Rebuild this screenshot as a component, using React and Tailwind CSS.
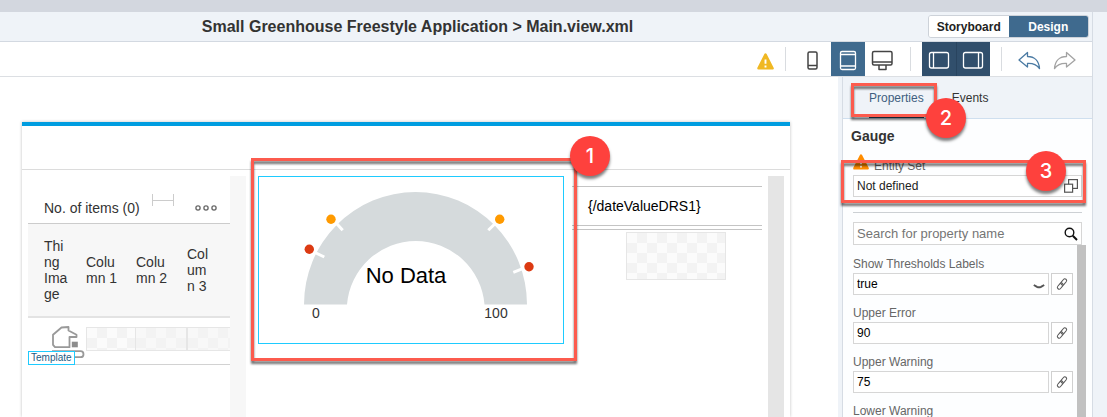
import React from "react";

const CHECKER =
  "bg-[repeating-conic-gradient(#f3f3f3_0_25%,#fbfbfb_0_50%)] bg-[length:20px_20px] border border-[#e6e6e6]";

function Frame({ className }) {
  return (
    <div
      className={`pointer-events-none absolute z-20 border-[3px] border-[#fc5b4e] drop-shadow-[0_3px_1px_rgba(0,0,0,0.55)] ${className}`}
    />
  );
}

function Marker({ className, children }) {
  return (
    <div
      className={`pointer-events-none absolute z-30 flex size-10 items-center justify-center rounded-full bg-[#fe413d] font-['Inter',sans-serif] text-xl font-medium text-white shadow-[0_3px_3px_rgba(0,0,0,0.5)] ${className}`}
    >
      {children}
    </div>
  );
}

function Warning({ className }) {
  return (
    <svg viewBox="0 0 16 16" className={className} aria-hidden="true">
      <path d="M8 1.6 14.6 14.4H1.4Z" fill="currentColor" stroke="currentColor" strokeWidth="2.4" strokeLinejoin="round" />
      <path d="M8 6v4.2M8 11.8v1.8" stroke="#fff" strokeWidth="1.8" />
    </svg>
  );
}

function ToolButton({ label, className = "", children }) {
  return (
    <button type="button" aria-label={label} className={`h-[34px] w-[34px] shrink-0 ${className}`}>
      <svg viewBox="0 0 34 34" fill="none" stroke="currentColor" strokeWidth="1.5" strokeLinejoin="round" className="size-[34px]">
        {children}
      </svg>
    </button>
  );
}

function Separator() {
  return <div className="mx-[11px] h-6 w-px shrink-0 bg-[#d9dce0]" />;
}

function Header() {
  return (
    <header className="flex h-[30px] items-center border-b border-[#d3d9e1] bg-[#eff3f8]">
      <h1 className="min-w-0 flex-1 text-center text-base leading-5 font-bold whitespace-nowrap text-[#333]">
        Small Greenhouse Freestyle Application &gt; Main.view.xml
      </h1>
      <div className="flex w-[257px] shrink-0 justify-end pr-[3px]">
        <div className="flex h-[23px] w-[161px] overflow-hidden rounded-[3px] border border-[#cdd2d9] text-xs font-bold">
          <button type="button" className="flex-1 bg-white text-[#222]">Storyboard</button>
          <button type="button" className="flex-1 bg-[#3f6a8e] text-white">Design</button>
        </div>
      </div>
    </header>
  );
}

function Toolbar() {
  return (
    <div className="flex h-[35px] items-center justify-end border-b border-[#dcdfe3] bg-white pr-[11px] text-[#444]">
      <Warning className="mt-1 size-[17px] text-[#f0b823]" />
      <Separator />
      <ToolButton label="Phone">
        <rect x="11" y="10" width="9" height="17" rx="1.5" />
        <path d="M11 23.5h9" />
      </ToolButton>
      <ToolButton label="Tablet" className="bg-[#3f6a8e] text-white">
        <rect x="9.5" y="9.5" width="15" height="18" rx="1.5" strokeWidth="1.3" />
        <path d="M9 12.5h16M9 24h16" strokeWidth="1.3" />
      </ToolButton>
      <ToolButton label="Desktop">
        <rect x="7.5" y="9.5" width="19.5" height="13.5" rx="1.5" />
        <path d="M7.5 20h19.5M14 23v4.500h7V23" />
      </ToolButton>
      <Separator />
      <ToolButton label="Left panel" className="bg-[#314f6c] text-white">
        <rect x="7.5" y="10.5" width="19" height="15.5" rx="2" strokeWidth="1.3" />
        <path d="M11.5 10.5v15.5" strokeWidth="1.3" />
      </ToolButton>
      <ToolButton label="Right panel" className="border-l border-[#29445f] bg-[#314f6c] text-white">
        <rect x="6.5" y="10.5" width="19" height="15.5" rx="2" strokeWidth="1.3" />
        <path d="M21.5 10.5v15.5" strokeWidth="1.3" />
      </ToolButton>
      <Separator />
      <ToolButton label="Undo" className="text-[#4a7aa3]">
        <path d="M6 18 14.5 10.5V14.5C21.5 14.5 26 19 26.5 26.5C23.5 22.5 20 21.2 14.5 21.5V25Z" strokeWidth="1.3" />
      </ToolButton>
      <ToolButton label="Redo" className="text-[#a3a3a3]">
        <path d="M28 18 19.5 10.5V14.5C12.5 14.5 8 19 7.5 26.5C10.5 22.5 14 21.2 19.5 21.5V25Z" strokeWidth="1.3" />
      </ToolButton>
    </div>
  );
}

function ItemsTable() {
  const head = "p-0 text-left align-middle text-sm leading-4 font-normal text-[#333]";
  const cell = "p-0 pt-[9px] align-top";
  return (
    <section className="relative w-[202px] shrink-0">
      <div className="flex h-12 items-center border-b border-[#ccc] pt-[17px] pl-4 text-sm text-[#333]">
        <span className="w-[108px]">No. of items (0)</span>
        <svg viewBox="0 0 22 12" className="mb-4 h-3 w-[22px]" stroke="#ccc" fill="none" aria-hidden="true">
          <path d="M.5 0v12M21.5 0v12M.5 6.5h21" />
        </svg>
        <button type="button" aria-label="More" className="ml-5">
          <svg viewBox="0 0 24 8" className="h-2 w-6" stroke="#666" strokeWidth="1.3" fill="none">
            <circle cx="4" cy="4" r="2.1" />
            <circle cx="12" cy="4" r="2.1" />
            <circle cx="20" cy="4" r="2.1" />
          </svg>
        </button>
      </div>
      <table className="w-full table-fixed border-collapse">
        <colgroup>
          <col className="w-[58px]" />
          <col className="w-[50px]" />
          <col className="w-[51px]" />
          <col className="w-[43px]" />
        </colgroup>
        <thead>
          <tr className="h-[93px] border-b-2 border-[#e3e3e3] bg-[#f7f7f7]">
            <th className={head}><div className="ml-4 w-[25px] break-words">Thing Image</div></th>
            <th className={head}><div className="w-[34px] break-words">Column 1</div></th>
            <th className={head}><div className="w-[34px] break-words">Column 2</div></th>
            <th className={head}><div className="w-[25px] break-words">Column 3</div></th>
          </tr>
        </thead>
        <tbody>
          <tr className="h-[47px] border-b border-[#d2d2d2]">
            <td className="p-0 align-top">
              <svg viewBox="0 0 34 34" className="mt-2 ml-[23px] h-[34px] w-[34px]" fill="none" stroke="#999" strokeWidth="1.8" aria-hidden="true">
                <path d="M10.500 1.500 17.500 1V4.500L25.500 8.800V11H18.500V21.200H4L2 18.800V8.800Z" strokeLinejoin="round" />
                <rect x="20.800" y="15.700" width="6" height="5.600" fill="#8c8c8c" stroke="none" />
                <path d="M1 25.200h28.500a3 3 0 0 1 0 6H24" />
              </svg>
            </td>
            <td className={cell}><div className={`h-6 ${CHECKER}`} /></td>
            <td className={cell}><div className={`h-6 border-l-0 bg-[repeating-conic-gradient(#f3f3f3_0_25%,#f8f8f8_0_50%)] bg-[length:20px_20px] border border-[#e6e6e6]`} /></td>
            <td className={cell}><div className={`h-6 border-r-0 bg-[repeating-conic-gradient(#f3f3f3_0_25%,#f8f8f8_0_50%)] bg-[length:20px_20px] border border-[#e6e6e6]`} /></td>
          </tr>
        </tbody>
      </table>
      <span className="absolute top-[175px] left-0 border border-[#1ecbff] bg-white px-0.5 text-[10px] leading-3 text-[#1b5b83]">
        Template
      </span>
    </section>
  );
}

function Gauge() {
  return (
    <section className="relative mr-2 ml-3 h-[168px] w-[306px] shrink-0 self-start border border-[#1ecbff]">
      <svg viewBox="1 1 304 166" className="h-full w-full font-['Liberation_Sans',Arial,sans-serif]" role="img" aria-label="Gauge">
        <path d="M46 128.500A111.500 112.500 0 0 1 269 128.500H226.500A69 69.500 0 0 0 89 128.500Z" fill="#d5dadc" />
        <path d="M77 45.700 84.700 54.300M57 76.500 66.300 81M238 46.700 230.300 54.300M264.700 92.600 255.300 96.300" stroke="#fff" strokeWidth="3" />
        <circle cx="73" cy="43.300" r="4.700" fill="#ff9a00" />
        <circle cx="241.700" cy="43.300" r="4.700" fill="#ff9a00" />
        <circle cx="51.300" cy="73.300" r="4.700" fill="#dc3a12" />
        <circle cx="271" cy="90.700" r="4.700" fill="#dc3a12" />
        <text x="148" y="107" fontSize="22" textAnchor="middle" fill="#000">No Data</text>
        <text x="58" y="142" fontSize="14" textAnchor="middle" fill="#333">0</text>
        <text x="238" y="142" fontSize="14" textAnchor="middle" fill="#333">100</text>
      </svg>
      <Frame className="-top-[19px] -left-2 h-[203px] w-[326px]" />
      <Marker className="-top-[41px] left-[311px]">1</Marker>
    </section>
  );
}

function Artboard() {
  return (
    <main className="flex min-w-0 flex-1 bg-white pt-[45px] pr-12 pl-[22px]">
      <div className="flex min-w-0 flex-1 flex-col border-t-4 border-[#009de0] shadow-[0_0_3px_rgba(0,0,0,0.25)]">
        <div className="h-11 shrink-0 border-b border-[#dcdcdc]" />
        <div className="flex min-h-0 flex-1 px-1.5 pt-1.5">
          <ItemsTable />
          <div className="w-4 shrink-0 bg-[#f7f7f7]" />
          <Gauge />
          <section className="min-w-0 flex-1 pt-2.5">
            <p className="flex h-10 items-center border-y border-[#c4c4c4] pl-4 text-sm text-black">{"{/dateValueDRS1}"}</p>
            <div className="mt-[3px] border-t border-[#c4c4c4]" />
            <div className="flex justify-center pt-0.5 pl-[18px]">
              <div className={`h-12 w-[100px] ${CHECKER}`} />
            </div>
          </section>
          <div className="ml-1.5 w-4 shrink-0 bg-[#e5e5e5]" />
        </div>
      </div>
    </main>
  );
}

const FIELD = "h-[22px] min-w-0 flex-1 border border-[#d6d6d6] bg-white px-[3px] text-xs text-black";

function LinkButton({ label }) {
  return (
    <button type="button" aria-label={label} className="flex size-[22px] shrink-0 items-center justify-center border border-[#d0d0d0] bg-white text-[#555]">
      <svg viewBox="0 0 14 14" className="size-3.5" fill="none" stroke="currentColor" strokeWidth="1" aria-hidden="true">
        <g transform="rotate(-50 7 7)">
          <rect x=".8" y="5.200" width="7" height="3.600" rx="1.800" />
          <rect x="6.200" y="5.200" width="7" height="3.600" rx="1.800" />
        </g>
      </svg>
    </button>
  );
}

function Property({ id, label, children }) {
  return (
    <div className="mb-2.5">
      <label htmlFor={id} className="mb-px block text-xs leading-4 text-[#666]">{label}</label>
      <div className="flex gap-0.5">
        {children}
        <LinkButton label={`Bind ${label}`} />
      </div>
    </div>
  );
}

function PropertiesPanel() {
  return (
    <aside className="flex w-[250px] shrink-0 flex-col border-l border-[#d6dce4] bg-[#fdfeff]">
      <nav className="relative flex h-[42px] shrink-0 gap-7 border-b border-[#cfdfef] bg-[#eff3f8] pl-[26px] text-xs">
        <a href="#properties" className="border-b-4 border-[#22384d] pt-[13px] leading-4 text-[#3f5f80]">Properties</a>
        <a href="#events" className="pt-[13px] leading-4 text-[#333]">Events</a>
        <Frame className="top-1.5 left-2 h-[34px] w-[86px]" />
        <Marker className="top-[21px] left-[83px]">2</Marker>
      </nav>
      <h2 className="mt-[7px] pl-2 text-sm leading-5 font-bold text-[#333]">Gauge</h2>
      <div className="relative mt-3 mr-2.5 ml-2.5 shrink-0">
        <div className="flex h-[17px] items-start gap-[5px]">
          <Warning className="-mt-1 size-4 text-[#ff8c00]" />
          <label htmlFor="entity" className="text-xs leading-4 text-[#666]">Entity Set</label>
        </div>
        <div className="flex h-[22px] items-center border border-[#d6d6d6] bg-white pr-[3px] pl-[3px]">
          <input id="entity" defaultValue="Not defined" className="min-w-0 flex-1 text-xs text-[#222]" />
          <button type="button" aria-label="Select entity set">
            <svg viewBox="0 0 14 14" className="size-3.5" fill="#fff" stroke="#555" strokeWidth="1.200" aria-hidden="true">
              <rect x="4.600" y=".6" width="8.800" height="8.800" />
              <rect x=".6" y="5.200" width="8" height="8" />
            </svg>
          </button>
        </div>
        <Frame className="top-0.5 -left-3 h-[43px] w-[245px]" />
        <Marker className="-top-[7px] left-[173px]">3</Marker>
      </div>
      <hr className="mx-2.5 mt-[15px] border-[#ccd0d4]" />
      <div className="mx-2.5 mt-[9px] flex h-[23px] shrink-0 items-center border border-[#d6d6d6] bg-white px-[3px]">
        <input aria-label="Search for property name" placeholder="Search for property name" className="min-w-0 flex-1 text-[13px] placeholder:text-[#757575]" />
        <svg viewBox="0 0 14 14" className="size-3.5" fill="none" stroke="#111" aria-hidden="true">
          <circle cx="5.500" cy="5.500" r="4.300" strokeWidth="1.400" />
          <path d="m8.800 8.800 4.200 4.200" strokeWidth="2" />
        </svg>
      </div>
      <div className="flex min-h-0 flex-1 pr-1.5 pl-2.5">
        <div className="min-w-0 flex-1 overflow-hidden pt-[11px] pr-1">
          <Property id="labels" label="Show Thresholds Labels">
            <div className="grid flex-1">
              <select id="labels" className={`col-start-1 row-start-1 appearance-none ${FIELD}`}>
                <option>true</option>
                <option>false</option>
              </select>
              <svg viewBox="0 0 12 5" className="pointer-events-none col-start-1 row-start-1 mt-1 mr-1 h-[5px] w-3 self-center justify-self-end" fill="none" stroke="#555" strokeWidth="2" aria-hidden="true">
                <path d="M.8 1 4 2.900Q6 3.800 8 2.900L11.200 1" />
              </svg>
            </div>
          </Property>
          <Property id="upper-error" label="Upper Error">
            <input id="upper-error" defaultValue="90" className={FIELD} />
          </Property>
          <Property id="upper-warning" label="Upper Warning">
            <input id="upper-warning" defaultValue="75" className={FIELD} />
          </Property>
          <Property id="lower-warning" label="Lower Warning">
            <input id="lower-warning" defaultValue="25" className={FIELD} />
          </Property>
        </div>
        <div className="w-[9px] shrink-0 bg-[#c1c1c1]" />
      </div>
    </aside>
  );
}

export default function App() {
  return (
    <div className="flex h-screen flex-col overflow-hidden bg-white font-['Liberation_Sans',Arial,sans-serif]">
      <div className="h-3 shrink-0 bg-[#d3d7df]" />
      <div className="flex min-h-0 flex-1">
        <div className="flex min-w-0 flex-1 flex-col border-r border-[#d6dce4]">
          <Header />
          <Toolbar />
          <div className="flex min-h-0 flex-1">
            <Artboard />
            <div className="w-1 shrink-0 bg-[#eff3f8]" />
            <PropertiesPanel />
          </div>
        </div>
        <div className="w-3.5 shrink-0 bg-[#eff3f8]" />
      </div>
    </div>
  );
}
